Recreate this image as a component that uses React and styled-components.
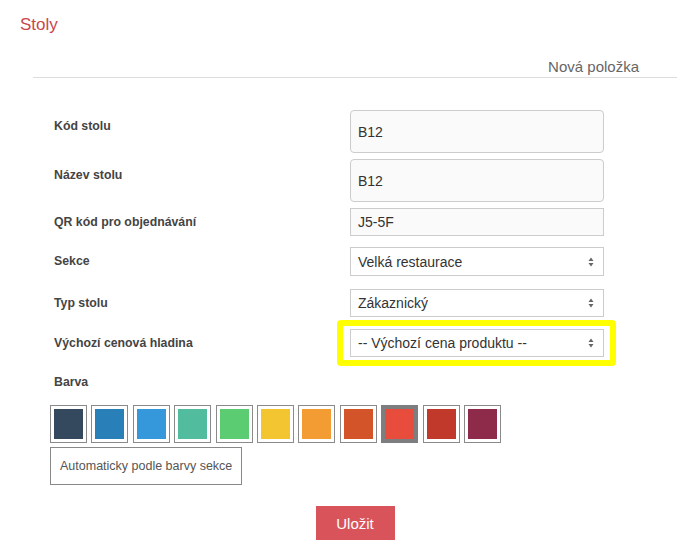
import React from "react"
import styled, {createGlobalStyle} from 'styled-components'

const GlobalStyle = createGlobalStyle`
  body {
    margin: 0;
    background: #fff;
    font-family: "Liberation Sans", Arial, sans-serif;
  }
`

const colors = [
    '#34495e', '#2980b9', '#3498db', '#52bc9e', '#5ccc73', '#f2c531',
    '#f39c33', '#d4542a', '#e74c3c', '#c0392b', '#8e2b4b'
]

function Arrows() {
    return <svg width="6" height="10" viewBox="0 0 6 10">
        <path d="M3 0.5 L5.5 4 L0.5 4 Z" fill="#666"/>
        <path d="M0.5 6 L5.5 6 L3 9.5 Z" fill="#666"/>
    </svg>
}

function App() {
    return <Page>
        <GlobalStyle/>
        <Title>Stoly</Title>
        <Panel>
            <PanelHeader>Nová položka</PanelHeader>
            <Form>
                <Row $gap={6}>
                    <Label $top={2}>Kód stolu</Label>
                    <Input $tall defaultValue="B12"/>
                </Row>
                <Row $gap={6}>
                    <Label $top={2}>Název stolu</Label>
                    <Input $tall defaultValue="B12"/>
                </Row>
                <Row $gap={11}>
                    <Label>QR kód pro objednávání</Label>
                    <Input defaultValue="J5-5F"/>
                </Row>
                <Row $gap={13}>
                    <Label>Sekce</Label>
                    <Select $h={29}>Velká restaurace<Arrows/></Select>
                </Row>
                <Row $gap={12}>
                    <Label>Typ stolu</Label>
                    <Select>Zákaznický<Arrows/></Select>
                </Row>
                <Row $gap={11}>
                    <Label>Výchozí cenová hladina</Label>
                    <Highlight>
                        <Select>-- Výchozí cena produktu --<Arrows/></Select>
                    </Highlight>
                </Row>
                <Label>Barva</Label>
                <Swatches>
                    {colors.map((c, i) => (
                        <Swatch key={c} $selected={i === 8}>
                            <SwatchFill style={{background: c}}/>
                        </Swatch>
                    ))}
                </Swatches>
                <AutoButton>Automaticky podle barvy sekce</AutoButton>
                <Actions>
                    <SaveButton>Uložit</SaveButton>
                </Actions>
            </Form>
        </Panel>
    </Page>
}

export default App

const Page = styled.div`
  padding: 15px 0 20px 20px;
`
const Title = styled.div`
  font-size: 17px;
  line-height: 20px;
  color: #c9474b;
`
const Panel = styled.div`
  margin: 22px 0 0 13px;
`
const PanelHeader = styled.div`
  text-align: right;
  padding-right: 38px;
  font-size: 15px;
  line-height: 20px;
  color: #666;
  border-bottom: 1px solid #ddd;
`
const Form = styled.div`
  padding: 32px 0 0 21px;
`
const Row = styled.div`
  display: flex;
  align-items: flex-start;
  margin-bottom: ${p => p.$gap}px;
`
const Label = styled.div`
  width: 296px;
  flex-shrink: 0;
  padding-top: ${p => p.$top || 0}px;
  font-size: 12.3px;
  font-weight: bold;
  line-height: 28px;
  color: #444;
`
const Input = styled.input`
  box-sizing: border-box;
  width: 254px;
  height: ${p => p.$tall ? 43 : 28}px;
  margin: 0;
  padding: 0 7px;
  border: 1px solid #ccc;
  border-radius: ${p => p.$tall ? 4 : 0}px;
  background: #fafafa;
  font-family: "Liberation Sans", Arial, sans-serif;
  font-size: 14px;
  color: #333;
  outline: none;
`
const Select = styled.div`
  box-sizing: border-box;
  width: 254px;
  height: ${p => p.$h || 28}px;
  padding: 0 9px 0 7px;
  border: 1px solid #ccc;
  background: #fff;
  display: flex;
  align-items: center;
  justify-content: space-between;
  font-size: 14px;
  color: #333;
`
const Highlight = styled.div`
  margin: -9px -12px -9px -13px;
  padding: 3px 6px 3px 7px;
  border: 6px solid #ffff00;
  border-radius: 4px;
`
const Swatches = styled.div`
  display: flex;
  gap: 4.4px;
  margin: 9px 0 4px -4px;
`
const Swatch = styled.div`
  box-sizing: border-box;
  width: 37px;
  height: 38px;
  padding: ${p => p.$selected ? 0 : 3}px;
  border: ${p => p.$selected ? '4px solid #7d7e80' : '1px solid #8a8a8a'};
  background: #fff;
`
const SwatchFill = styled.div`
  width: 100%;
  height: 100%;
`
const AutoButton = styled.div`
  box-sizing: border-box;
  display: inline-flex;
  align-items: center;
  height: 38px;
  margin-left: -4px;
  padding: 0 9px;
  border: 1px solid #888;
  font-size: 12.5px;
  color: #555;
`
const Actions = styled.div`
  display: flex;
  justify-content: center;
  margin: 21px 0 0 -21px;
`
const SaveButton = styled.button`
  width: 79px;
  height: 34px;
  border: none;
  background: #d9545a;
  color: #fff;
  font-family: "Liberation Sans", Arial, sans-serif;
  font-size: 15px;
`
